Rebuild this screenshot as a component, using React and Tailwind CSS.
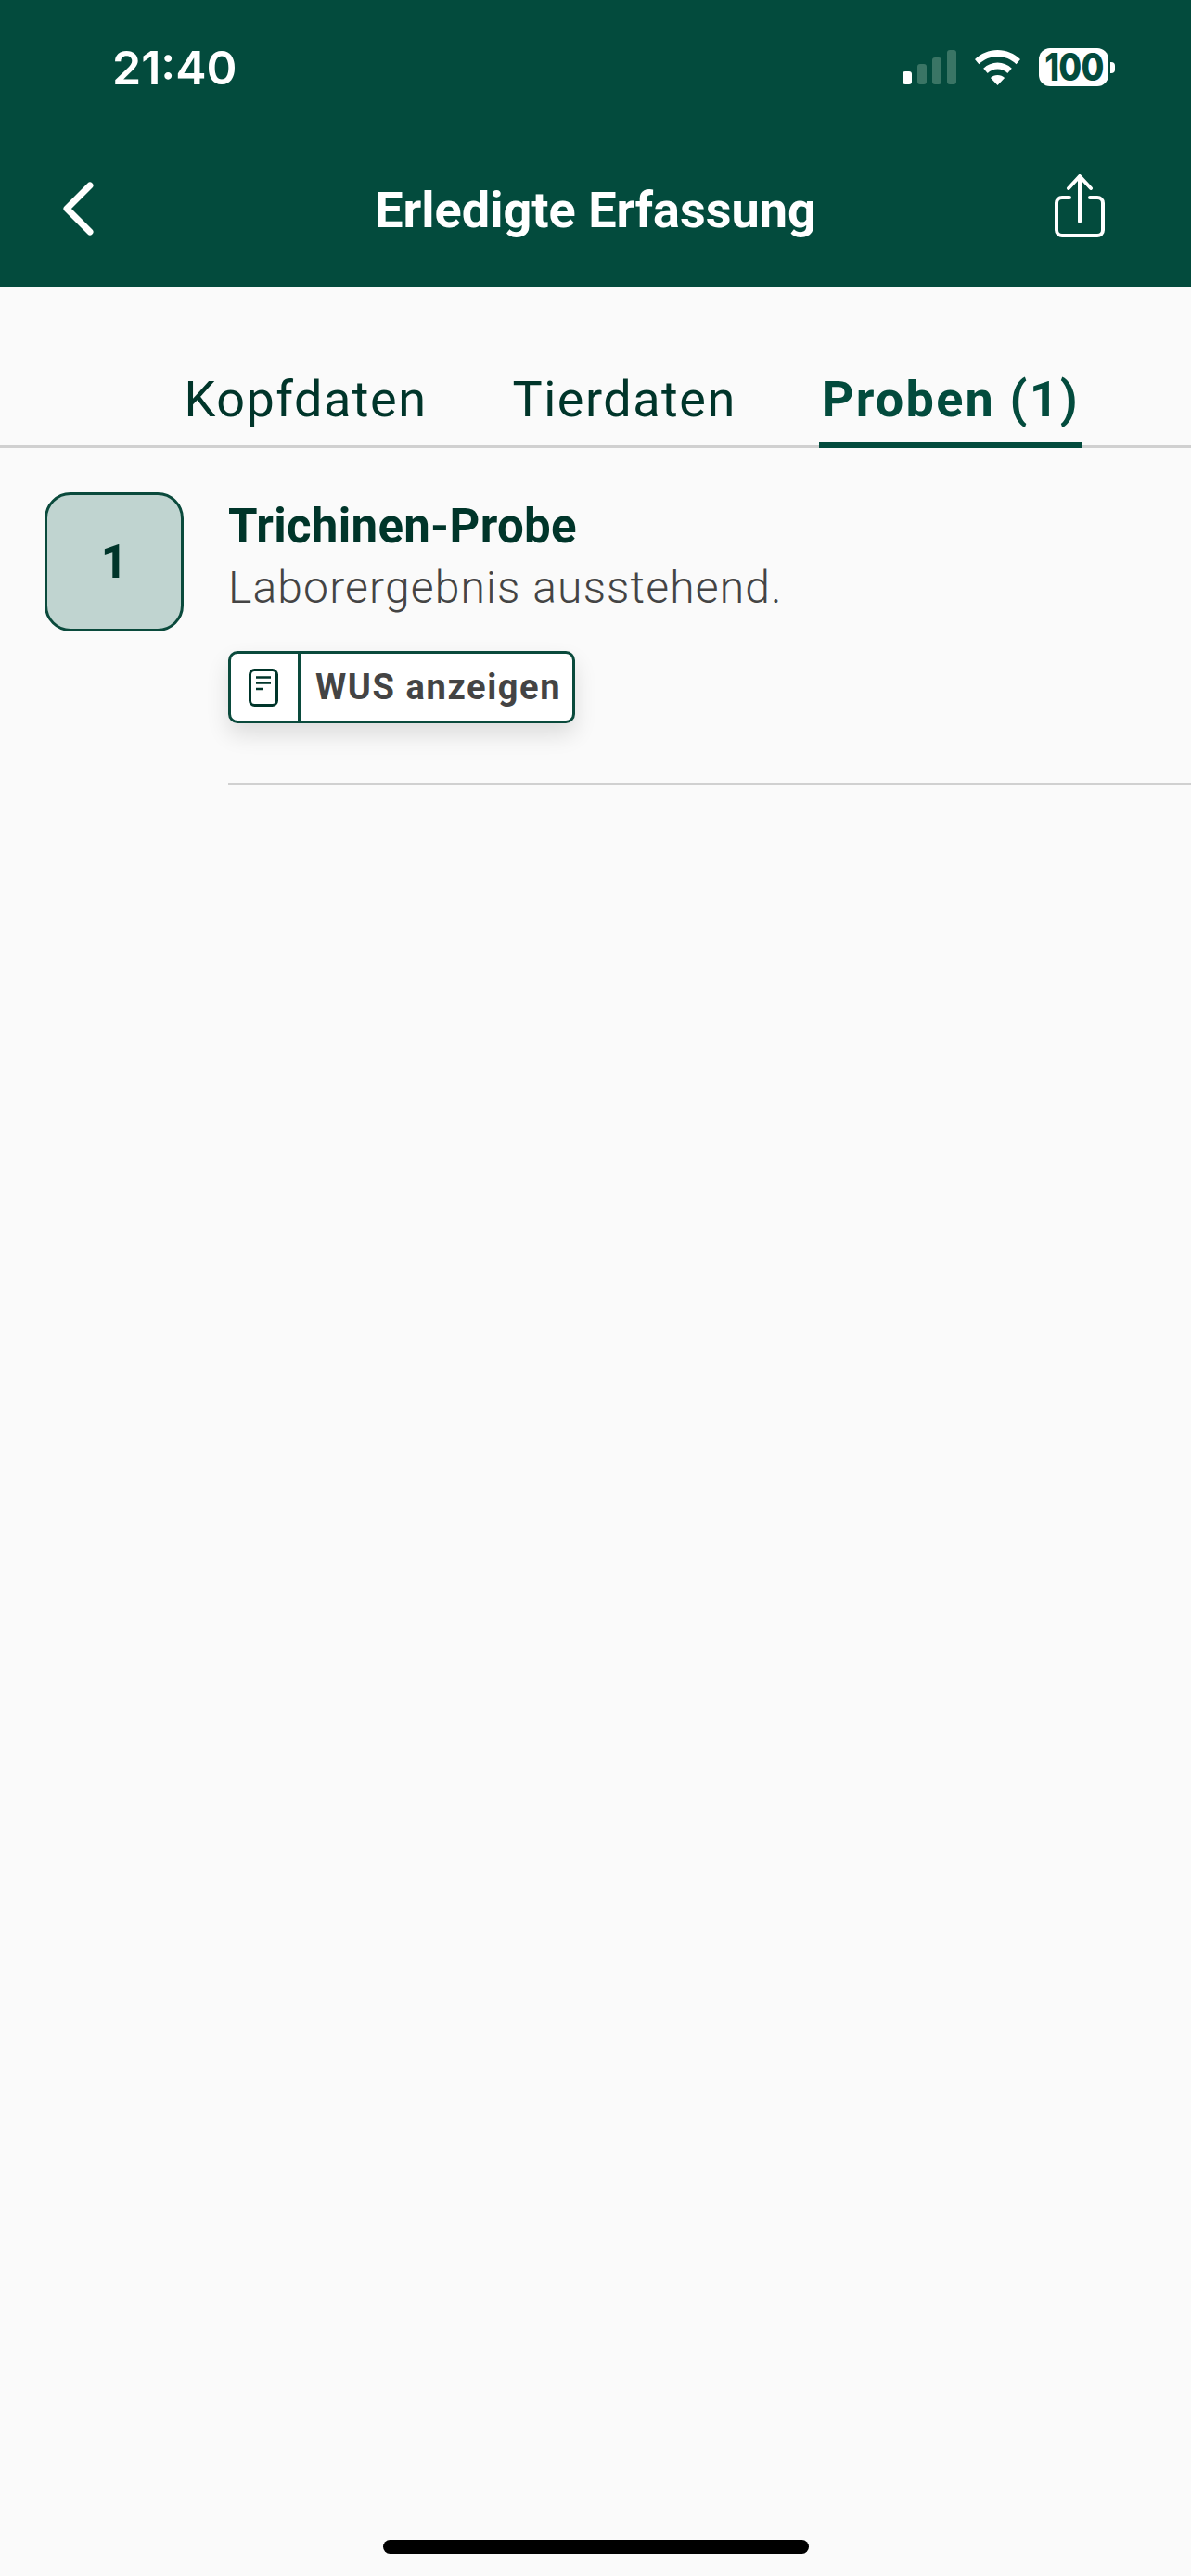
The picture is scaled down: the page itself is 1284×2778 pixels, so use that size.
const roboto = { fontFamily: 'Roboto, sans-serif' };

function Signal() {
  return (
    <div className="flex items-end gap-[6px] h-[37px]">
      <div className="w-[10px] h-[14px] rounded-[3px] bg-white" />
      <div className="w-[10px] h-[22px] rounded-[3px] bg-[#3a7565]" />
      <div className="w-[10px] h-[29px] rounded-[3px] bg-[#3a7565]" />
      <div className="w-[10px] h-[37px] rounded-[3px] bg-[#3a7565]" />
    </div>
  );
}

function Wifi() {
  return (
    <svg width="49" height="38" viewBox="0 0 49 38" fill="none">
      <path d="M24.5 0C15 0 6.6 3.7 0 10l4.4 5.2C10 9.9 17 7 24.5 7s14.500 2.900 20.100 8.200L49 10C42.400 3.700 34 0 24.500 0Z" fill="#fff" />
      <path d="M24.500 13.500c-5.900 0-11.100 2.300-15.300 6.200l4.500 5.200c2.900-2.700 6.700-4.400 10.800-4.400s7.900 1.700 10.800 4.400l4.500-5.200c-4.200-3.900-9.400-6.200-15.300-6.200Z" fill="#fff" />
      <path d="M24.500 27c-3 0-5.600 1.100-7.600 3l7.600 8 7.600-8c-2-1.900-4.600-3-7.600-3Z" fill="#fff" />
    </svg>
  );
}

function Battery() {
  return (
    <div className="flex items-center">
      <div
        className="w-[75px] h-[41px] rounded-[12px] bg-white flex items-center justify-center text-[#034b3d] text-[41px] font-extrabold leading-none"
        style={{ fontFamily: 'Inter, sans-serif' }}
      >
        <span className="inline-block tracking-[-1px] scale-x-[0.88]">100</span>
      </div>
      <div className="w-[5px] h-[12px] ml-[2px] rounded-r-[4px] bg-white" />
    </div>
  );
}

function Tab({ children, active, className = '' }) {
  return (
    <div
      className={
        '-mb-[3px] pb-[21px] border-b-[6px] leading-[50px] text-[54px] ' +
        className +
        ' ' +
        (active
          ? 'px-[3px] font-bold text-[#034b3d] border-[#034b3d] tracking-[2.2px]'
          : 'border-transparent font-normal text-[#00352a] tracking-[1.5px]')
      }
    >
      {children}
    </div>
  );
}

export default function App() {
  return (
    <div className="w-[1284px] h-[2778px] bg-[#fafafa] flex flex-col overflow-hidden relative" style={roboto}>
      <header className="h-[309px] bg-[#034b3d] text-white flex flex-col shrink-0">
        <div className="flex items-start justify-between h-[188px] pl-[121px] pr-[82px] pt-[52px]">
          <div className="text-[50px] leading-[42px] font-semibold" style={{ fontFamily: 'Inter, sans-serif' }}>
            21:40
          </div>
          <div className="flex items-start gap-[20px]">
            <div className="pt-[2px]"><Signal /></div>
            <div className="pt-[2px]"><Wifi /></div>
            <Battery />
          </div>
        </div>
        <div className="grid grid-cols-[1fr_auto_1fr] items-start px-[92px]">
          <svg className="mt-[7px] -ml-[26px]" width="36" height="60" viewBox="0 0 36 60" fill="none">
            <path d="M31 5 L6 30 L31 55" stroke="#fff" strokeWidth="7" strokeLinecap="round" strokeLinejoin="round" />
          </svg>
          <div className="text-[54px] leading-[60px] font-bold mt-[9px]">Erledigte Erfassung</div>
          <svg className="justify-self-end" width="56" height="68" viewBox="0 0 56 68" fill="none">
            <path d="M17 25 H9 a6 6 0 0 0 -6 6 V60 a6 6 0 0 0 6 6 H47 a6 6 0 0 0 6 -6 V31 a6 6 0 0 0 -6 -6 H39" stroke="#fff" strokeWidth="4" strokeLinecap="round" />
            <path d="M28 3 V51" stroke="#fff" strokeWidth="4" strokeLinecap="round" />
            <path d="M16 15 L28 2 L40 15" stroke="#fff" strokeWidth="4" strokeLinecap="round" strokeLinejoin="round" />
          </svg>
        </div>
      </header>

      <nav className="h-[174px] shrink-0 flex items-end justify-end gap-[89px] pr-[117px] border-b-[3px] border-[#d0d0d0]">
        <Tab className="mr-[3px]">Kopfdaten</Tab>
        <Tab>Tierdaten</Tab>
        <Tab active>Proben (1)</Tab>
      </nav>

      <section className="flex pl-[48px] pt-[48px] gap-[48px]">
        <div className="w-[150px] h-[150px] shrink-0 rounded-[28px] border-[3px] border-[#0a4a3c] bg-[#c0d4d0] flex items-center justify-center text-[#00352a] text-[50px] font-bold">
          1
        </div>
        <div className="flex-1 flex flex-col">
          <div className="text-[51px] leading-[58px] font-bold text-[#00352a] tracking-[0.3px] mt-[8px]">Trichinen-Probe</div>
          <div className="text-[48px] leading-[54px] font-light text-[#444444] tracking-[1.15px] mt-[10px]">Laborergebnis ausstehend.</div>
          <div className="mt-[41px] w-[374px] h-[78px] flex rounded-[10px] border-[3px] border-[#0a4a3c] bg-white shadow-[0_12px_24px_rgba(0,0,0,0.12)]">
            <div className="w-[75px] flex items-center justify-center border-r-[3px] border-[#0a4a3c]">
              <svg className="-ml-[2px]" width="32" height="41" viewBox="0 0 32 41" fill="none">
                <rect x="1.500" y="1.500" width="29" height="38" rx="5" stroke="#00352a" strokeWidth="3" />
                <path d="M8 9.500 H24 M8 15.500 H24 M8 22 H16" stroke="#00352a" strokeWidth="2.500" />
              </svg>
            </div>
            <div className="flex-1 pl-[16px] flex items-center text-[38px] font-bold text-[#444444] tracking-[1.6px]">WUS anzeigen</div>
          </div>
          <div className="mt-[64px] h-[3px] bg-[#d0d0d0]" />
        </div>
      </section>

      <div className="absolute left-[413px] top-[2739px] w-[459px] h-[15px] rounded-full bg-black" />
    </div>
  );
}
